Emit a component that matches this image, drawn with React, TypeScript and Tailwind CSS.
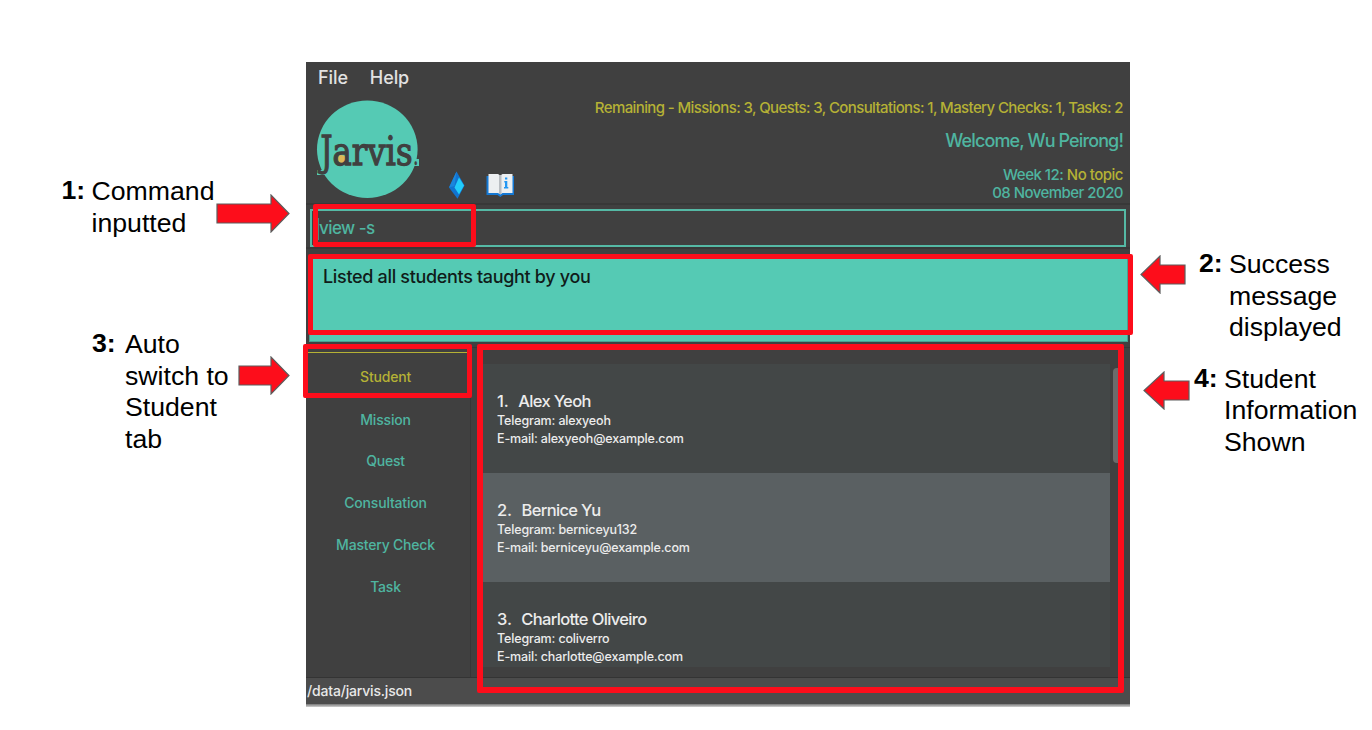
import React from "react";

const tabs = ["Mission", "Quest", "Consultation", "Mastery Check", "Task"];

const students = [
  { name: "Alex Yeoh", telegram: "alexyeoh", email: "alexyeoh@example.com" },
  { name: "Bernice Yu", telegram: "berniceyu132", email: "berniceyu@example.com" },
  { name: "Charlotte Oliveiro", telegram: "coliverro", email: "charlotte@example.com" },
];

function Logo() {
  return (
    <svg className="block overflow-visible" width="106" height="100" viewBox="316 100 106 100">
      <ellipse cx="367.3" cy="149.3" rx="50.3" ry="48.7" fill="#55cab4" />
      <rect x="317" y="170" width="8" height="5" fill="#55cab4" />
      <rect x="412.5" y="159" width="6.5" height="7" fill="#55cab4" />
      <ellipse cx="341" cy="159.3" rx="5.4" ry="4.4" fill="#dcb958" />
      <g fill="#404040" stroke="#404040" strokeWidth="1.3" fontFamily="DejaVu Serif, serif">
        <text x="320.5" y="165" fontSize="41" textLength="12" lengthAdjust="spacingAndGlyphs">J</text>
        <text x="332.5" y="164.5" fontSize="40" textLength="80" lengthAdjust="spacingAndGlyphs">arvis</text>
        <text x="413" y="164.5" fontSize="28" textLength="5.5" lengthAdjust="spacingAndGlyphs" strokeWidth="0.3">.</text>
      </g>
    </svg>
  );
}

function Gem() {
  return (
    <svg className="block" width="16" height="28" viewBox="449 171 16 28">
      <path d="M456.5 171.5 L464.5 185.5 L457.5 198.8 L449 187.5 Z" fill="#1173cf" />
      <path d="M456.5 171.5 L454.5 186 L449 187.5 Z" fill="#1a86dd" />
      <path d="M459 177.5 L464 185.5 L459 194.5 L454.5 187.5 Z" fill="#22cdfb" />
    </svg>
  );
}

function Book() {
  return (
    <svg className="block" width="28" height="24" viewBox="486 173 28 24">
      <path d="M486.5 176 H514 V195 H503 L500.3 197 L497.5 195 H486.5 Z" fill="#1478d4" />
      <path d="M488.5 174 H498 L500.3 175.5 L502.5 174 H512.5 V193 H502.5 L500.3 194.5 L498 193 H488.5 Z" fill="#eceff1" />
      <path d="M499 175 H501.5 V194 H499 Z" fill="#b8bdc2" />
      <path d="M505 177.5 H507.3 V179.5 H505 Z M504.3 181 H507.3 V187 H508.3 V188.5 H504 V187 H505 V182.5 H504.3 Z" fill="#2196f3" />
    </svg>
  );
}

function Arrow({ w, shaft, left }: { w: number; shaft: number; left?: boolean }) {
  return (
    <svg className={left ? "block shrink-0 -scale-x-100" : "block shrink-0"} width={w + 2} height="39" viewBox={`-1 0 ${w + 2} 39`}>
      <path
        d={`M0 10 H${shaft} V1 L${w} 19.5 L${shaft} 38 V29 H0 Z`}
        fill="#fd0d1b"
        stroke="#5d5d5d"
        strokeWidth="1.2"
      />
    </svg>
  );
}

function Note({ n, lines, wide }: { n: string; lines: string[]; wide?: boolean }) {
  return (
    <div className="flex whitespace-nowrap text-[26.67px] leading-[31.6px] text-black">
      <b className={wide ? "-mt-px w-[33px] shrink-0" : "-mt-px w-[30px] shrink-0"}>{n}:</b>
      <div>
        {lines.map((l) => (
          <div key={l}>{l}</div>
        ))}
      </div>
    </div>
  );
}

export default function App() {
  return (
    <div className="flex h-[730px] w-[1372px] overflow-hidden bg-white font-['Liberation_Sans',sans-serif]">
      <aside className="w-[306px] shrink-0">
        <div className="flex pt-[176px] pl-[61.5px]">
          <Note n="1" lines={["Command", "inputted"]} />
          <div className="mt-[18px] ml-[2px]">
            <Arrow w={72} shaft={54} />
          </div>
        </div>
        <div className="flex pt-[90px] pl-[92px]">
          <div className="w-[145px]">
            <Note n="3" wide lines={["Auto", "switch to", "Student", "tab"]} />
          </div>
          <div className="mt-[27px] ml-[0.5px]">
            <Arrow w={50} shaft={32} />
          </div>
        </div>
      </aside>

      <main className="relative mt-[62px] flex h-[645px] w-[824px] shrink-0 flex-col bg-[#404040] font-['Inter',sans-serif] font-[450]">
        <header className="flex h-[143px] shrink-0 justify-between border-b-2 border-[#383838]">
          <div>
            <nav className="flex h-[38px] gap-[22px] pt-[5px] pl-3 text-[18px] leading-[22px] tracking-[-0.1px] text-[#e2e2e2]">
              <span>File</span>
              <span>Help</span>
            </nav>
            <div className="flex items-end pl-2.5">
              <Logo />
              <div className="mb-px ml-[27px]">
                <Gem />
              </div>
              <div className="mb-[3px] ml-[21px]">
                <Book />
              </div>
            </div>
          </div>
          <div className="flex flex-col items-end pt-[36px] pr-[7px] whitespace-nowrap text-[#4fb5a0]">
            <div className="text-[15px] leading-[20px] tracking-[-0.61px] text-[#b5b135]">
              Remaining - Missions: 3, Quests: 3, Consultations: 1, Mastery Checks: 1, Tasks: 2
            </div>
            <div className="mt-[12px] text-[18px] leading-[22px] tracking-[-0.88px]">Welcome, Wu Peirong!</div>
            <div className="mt-[14px] text-[15px] leading-[18px] tracking-[-0.5px]">
              Week 12: <span className="text-[#b5b135]">No topic</span>
            </div>
            <div className="text-[15px] leading-[18px] tracking-[-0.54px]">08 November 2020</div>
          </div>
        </header>

        <section className="h-[44px] shrink-0 border-b-2 border-[#383838] px-1 pt-[4px]">
          <div className="flex h-[38px] items-center border-2 border-[#55b9a5] pt-[2px] pl-[6px] text-[17px] tracking-[-0.55px] text-[#4fb5a0]">
            <span className="h-[22px] w-px bg-[#4a8d80]" />
            view -s
          </div>
        </section>

        <section className="h-[98px] shrink-0 pt-[6px] pr-[2px] pl-[3px]">
          <div className="h-[87px] border border-[#4a9f90] bg-[#55cab4] pt-[10px] pl-[13px] text-[18px] leading-[22px] tracking-[-0.33px] text-[#101c1a]">
            Listed all students taught by you
          </div>
        </section>

        <section className="flex h-[331px] shrink-0 border-b border-[#343434]">
          <div className="w-[165px] shrink-0 border-r border-[#373737] pt-[5px]">
            <div className="h-px bg-[#b5b135]" />
            <div className="flex flex-col pr-[5px] text-center text-[14px] leading-[41.7px] tracking-[-0.2px] text-[#4fb5a0]">
              <div className="pt-[3px] pb-px text-[#b5b135]">Student</div>
              {tabs.map((t) => (
                <div key={t}>{t}</div>
              ))}
            </div>
          </div>
          <div className="flex min-w-0 flex-1 border-t border-[#373737] pt-[16px] pl-[12px]">
            <div className="h-[303px] w-[627px] overflow-hidden">
              {students.map((s, i) => (
                <div
                  key={s.name}
                  className={
                    "h-[109px] pt-[27px] pl-[14px] text-[12.5px] leading-[18px] tracking-[-0.15px] text-[#ececec] " +
                    (i % 2 ? "bg-[#5a6062]" : "bg-[#434747]")
                  }
                >
                  <div className="text-[16.5px] leading-[21px] tracking-[-0.65px]">
                    <span className="tracking-[-0.1px]">{i + 1}.</span>
                    <span className="ml-[9.5px]">{s.name}</span>
                  </div>
                  <div>Telegram: {s.telegram}</div>
                  <div>E-mail: {s.email}</div>
                </div>
              ))}
            </div>
            <div className="mt-[4px] ml-[3px] h-[95px] w-[10px] rounded bg-[#6b6b6b]" />
          </div>
        </section>

        <footer className="h-[26px] shrink-0 bg-[#4c4c4c] pl-px text-[14px] leading-[26px] tracking-[-0.18px] text-[#e8e8e8]">
          /data/jarvis.json
        </footer>
        <div className="h-[3px] bg-linear-to-b from-[#777] to-[#d0d0d0]" />

        <div className="absolute top-[142px] left-[7px] h-[43px] w-[163px] rounded-[2px] border-[5.5px] border-[#fd0d1b]" />
        <div className="absolute top-[192px] left-[2px] h-[81px] w-[825px] rounded-[2px] border-[5.5px] border-[#fd0d1b]" />
        <div className="absolute top-[282px] left-[-3px] h-[54px] w-[169px] rounded-[2px] border-[5.5px] border-[#fd0d1b]" />
        <div className="absolute top-[282px] left-[171px] h-[349px] w-[647px] rounded-[2px] border-[6px] border-[#fd0d1b]" />
      </main>

      <aside className="w-[242px] shrink-0">
        <div className="flex pt-[249px] pl-[10px]">
          <div className="mt-[6px] mr-[13px]">
            <Arrow w={44} shaft={25} left />
          </div>
          <Note n="2" lines={["Success", "message", "displayed"]} />
        </div>
        <div className="flex pt-[20px] pl-[13px]">
          <div className="mt-[7px] mr-[4px]">
            <Arrow w={45} shaft={25} left />
          </div>
          <Note n="4" lines={["Student", "Information", "Shown"]} />
        </div>
      </aside>
    </div>
  );
}
